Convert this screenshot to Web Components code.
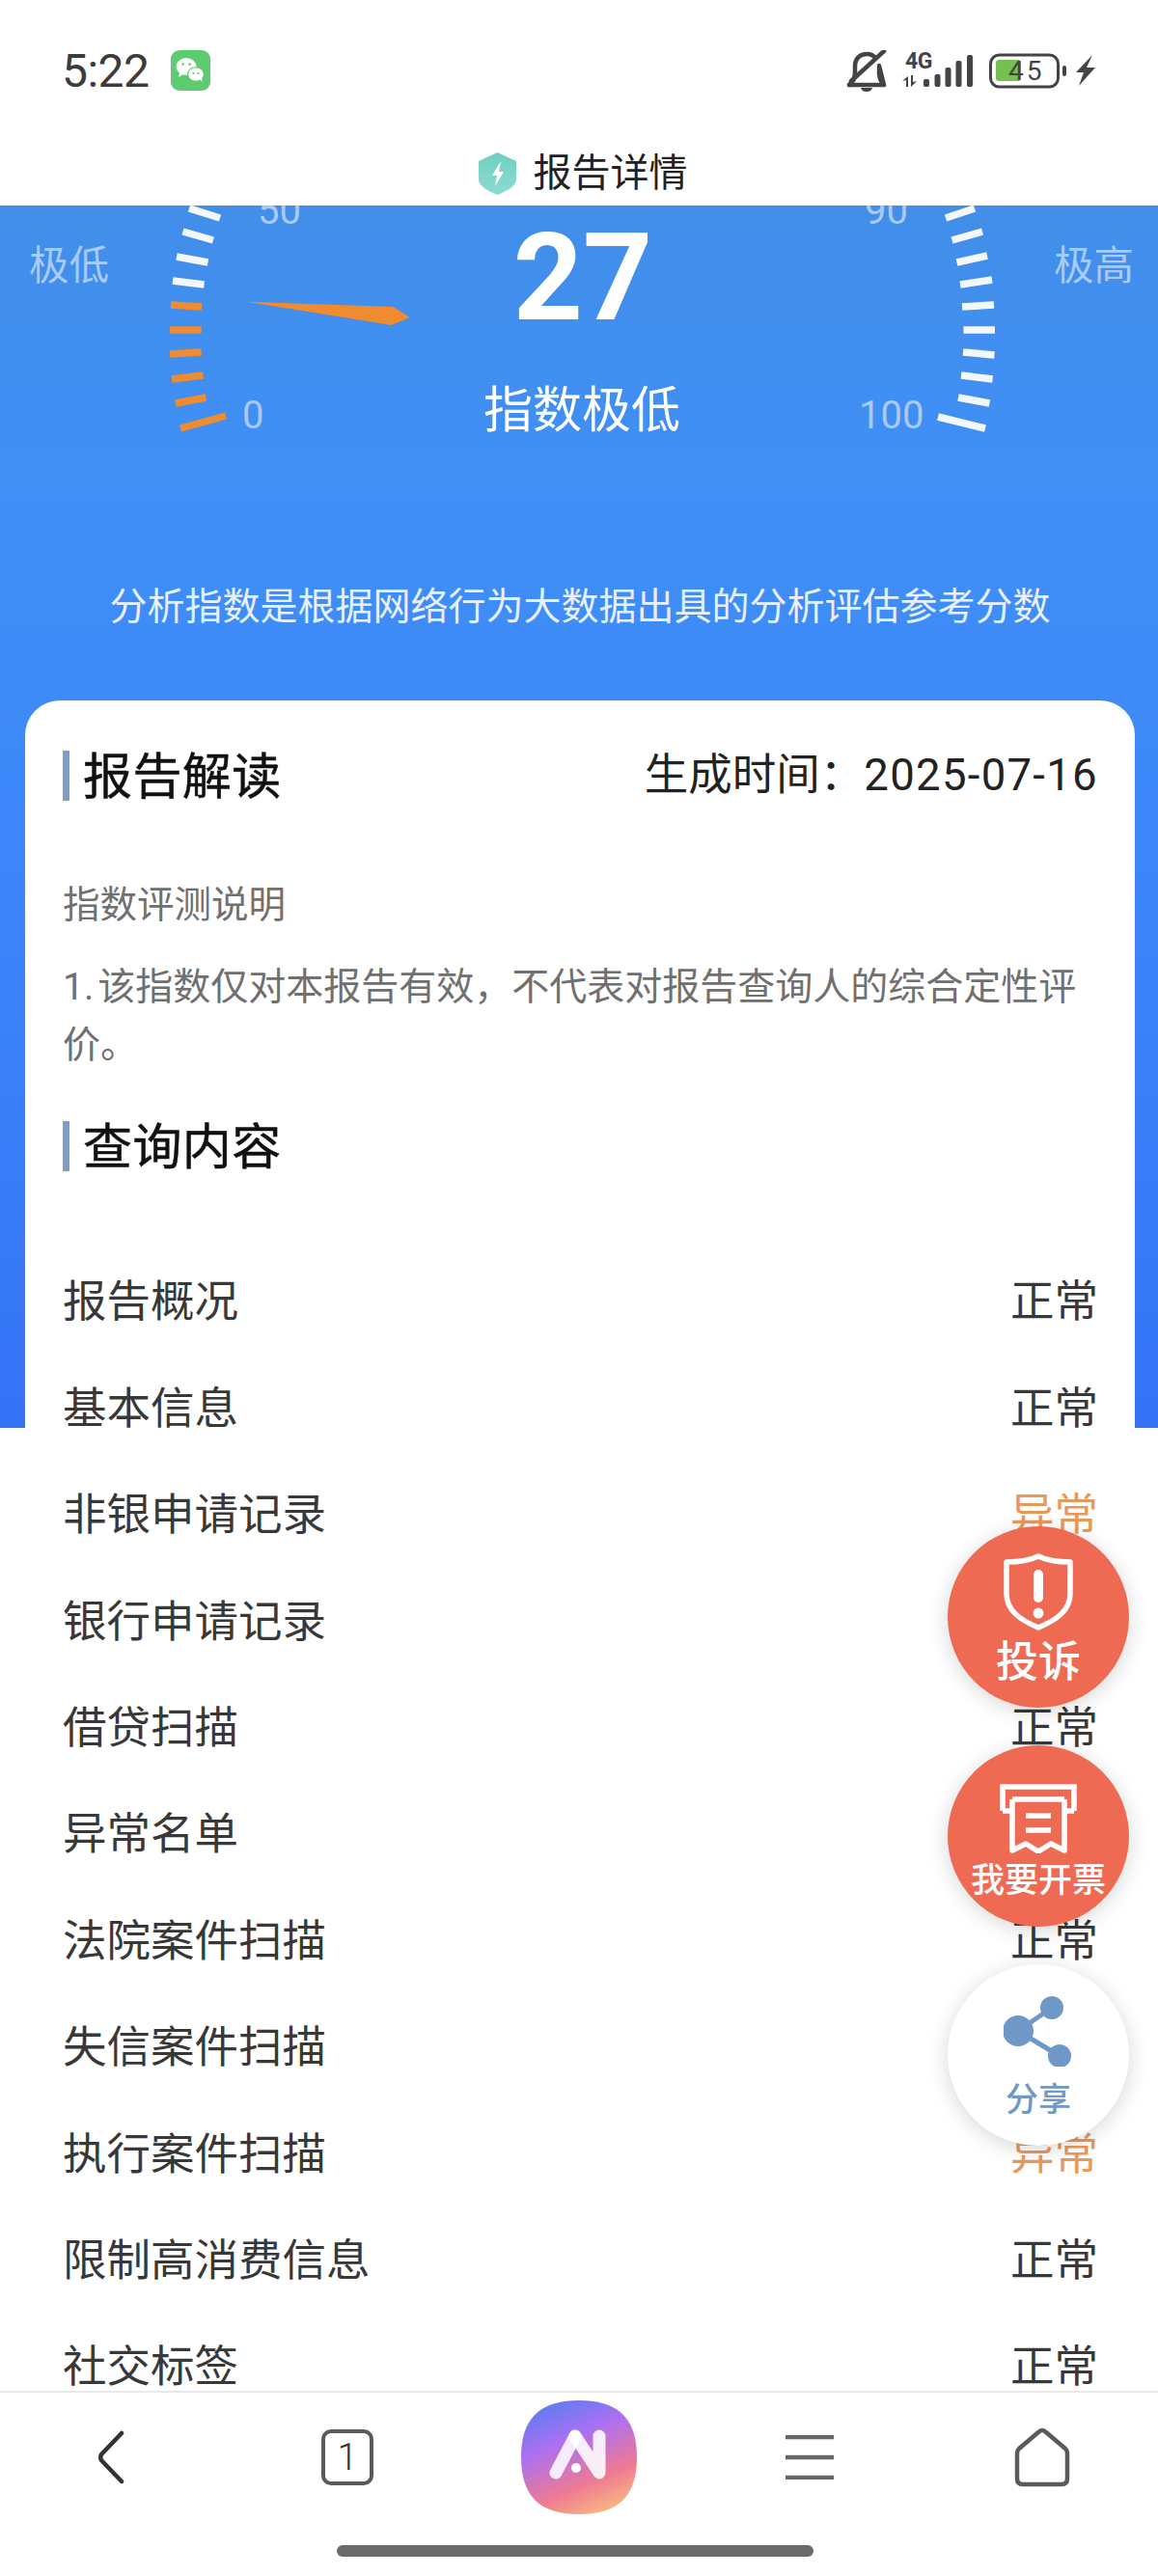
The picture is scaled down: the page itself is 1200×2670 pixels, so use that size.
<!DOCTYPE html>
<html lang="zh-CN">
<head>
<meta charset="utf-8">
<style>
html,body{margin:0;padding:0;background:#fff}
body{width:1200px;height:2670px;overflow:hidden;position:relative;display:flex;flex-direction:column;font-family:Roboto,"Noto Sans CJK SC",sans-serif;color:#333}
main-view{flex:1;min-height:0}
</style>
</head>
<body>
<status-bar></status-bar>
<title-bar>报告详情</title-bar>
<main-view>
  <gauge-panel score="27" level="指数极低">分析指数是根据网络行为大数据出具的分析评估参考分数</gauge-panel>
  <report-card>
    <card-heading label="生成时间&#xFF1A;" date="2025-07-16">报告解读</card-heading>
    <note-text></note-text>
    <card-heading class="second">查询内容</card-heading>
    <report-row>报告概况</report-row>
    <report-row>基本信息</report-row>
    <report-row state="异常">非银申请记录</report-row>
    <report-row>银行申请记录</report-row>
    <report-row>借贷扫描</report-row>
    <report-row>异常名单</report-row>
    <report-row>法院案件扫描</report-row>
    <report-row>失信案件扫描</report-row>
    <report-row state="异常">执行案件扫描</report-row>
    <report-row>限制高消费信息</report-row>
    <report-row>社交标签</report-row>
  </report-card>
</main-view>
<bottom-nav></bottom-nav>
<float-actions></float-actions>
<script>
function def(name, css, html){
  customElements.define(name, class extends HTMLElement{
    connectedCallback(){
      if(this.shadowRoot) return;
      const r=this.attachShadow({mode:'open'});
      r.innerHTML='<style>'+css+'</style>'+(typeof html==='function'?html(this):html);
    }
  });
}
const CJK='Roboto,"Noto Sans CJK SC",sans-serif';

def('status-bar',`
:host{display:flex;height:118px;box-sizing:border-box;padding:52px 64px 0 64px;justify-content:space-between;align-items:flex-start;background:#fff;flex:none}
.l{display:flex;align-items:flex-start;gap:20px}
.t{font:400 48px/44px ${CJK};color:#3c3c3c;width:93px;letter-spacing:-.5px}
svg{display:block}
`,`
<div class="l"><div class="t">5:22</div>
<svg width="41" height="42" viewBox="0 0 41 42"><rect width="41" height="42" rx="9" fill="#5dcb6f"/>
<ellipse cx="16" cy="17" rx="10.500" ry="9" fill="#fff"/><path d="M9 23l-1 5 5-3z" fill="#fff"/>
<ellipse cx="26" cy="25" rx="9" ry="7.800" fill="#5dcb6f"/><ellipse cx="26" cy="25" rx="7.800" ry="6.800" fill="#fff"/><path d="M30 30l2.500 3-.5-5z" fill="#fff"/>
<circle cx="12.500" cy="14.500" r="1.300" fill="#5dcb6f"/><circle cx="19.500" cy="14.500" r="1.300" fill="#5dcb6f"/><circle cx="23.500" cy="24" r="1.100" fill="#5dcb6f"/><circle cx="28.500" cy="24" r="1.100" fill="#5dcb6f"/></svg></div>
<svg width="260" height="46" viewBox="876 52 260 46">
<g fill="none" stroke="#444" stroke-width="4.500" stroke-linecap="round" stroke-linejoin="round">
<path d="M880 88c4-3 6-7 6-13v-7c0-7 5-12 12-12 4 0 7 1 9 4"/><path d="M911 68v7c0 6 2 10 5 13z"/><path d="M880 88h36"/><path d="M882 84l34-31"/></g>
<path d="M892 91h12c-1 3-3 4-6 4s-5-1-6-4z" fill="#444"/>
<text x="938" y="71" font-family="Roboto" font-weight="700" font-size="23" fill="#444" letter-spacing="-.5">4G</text>
<g fill="#444"><path d="M941 79v11h-2v-7l-4 1zM944 78h2v7l4-1-6 6z"/><rect x="957" y="82" width="6" height="8" rx="2"/><rect x="968.500" y="77" width="6" height="13" rx="2"/><rect x="979.500" y="70" width="6" height="20" rx="2"/><rect x="990.500" y="63" width="6" height="27" rx="2"/><rect x="1002" y="57" width="6" height="33" rx="2"/></g>
<rect x="1026.500" y="57" width="70" height="33" rx="9" fill="none" stroke="#444" stroke-width="3"/>
<rect x="1032" y="62" width="26" height="22" rx="3" fill="#76c04f"/>
<text x="1045" y="83" font-family="Roboto" font-size="28" fill="#444" letter-spacing="3">45</text>
<rect x="1101" y="68" width="4" height="11" rx="2" fill="#444"/>
<path d="M1132 57L1115 75h8l-5 14 17-19h-9z" fill="#444"/>
</svg>`);

def('title-bar',`
:host{display:flex;flex:none;height:95px;box-sizing:border-box;padding:28px 0 0 8px;justify-content:center;align-items:center;gap:18px;background:#fff;font:400 40px/1 ${CJK};color:#222}
svg{display:block}
`,`<svg width="39" height="44" viewBox="0 0 39 44"><defs><linearGradient id="s" x1="0" y1="0" x2="0" y2="1"><stop offset="0" stop-color="#6fcfc0"/><stop offset="1" stop-color="#8cdcd0"/></linearGradient></defs>
<path d="M19.500 0L39 9v19c0 7-10 12-19.500 16C10 40 0 35 0 28V9z" fill="url(#s)"/><path d="M23 9l-9 15h5l-2 11 9-15h-5z" fill="#fff"/></svg><span><slot></slot></span>`);

def('main-view',`
:host{display:block;overflow:hidden;background:linear-gradient(#428ee9 0,#3f8ff6 300px,#3d86f9 700px,#3473f6 1267px,#fff 1267px)}
`,`<slot></slot>`);

function tick(a){return a.map(p=>`<line x1="${p[0]}" y1="${p[1]}" x2="${p[2]}" y2="${p[3]}"/>`).join('')}
def('gauge-panel',`
:host{display:block;height:513px}
.stage{position:relative;height:386px;display:flex;flex-direction:column;align-items:center;box-sizing:border-box;padding:10px 0 0 6px;overflow:hidden}
svg{position:absolute;left:0;top:0}
svg text{font-family:${CJK};font-size:40px;fill:#a9caf6}
svg text.k{font-size:41.500px}
.score{position:relative;font:700 126px/130px ${CJK};color:#fff;left:1px}
.level{position:relative;font:400 51px/70px ${CJK};color:#fff;margin-top:38px}
.desc{font:400 39px/60px ${CJK};color:#e8f0fd;text-align:center;padding-left:2px}
`,h=>`<div class="stage">
<svg width="1200" height="386" viewBox="0 213 1200 386">
<text class="k" x="30" y="290">极低</text><text class="k" x="1092" y="290">极高</text>
<text x="267" y="232">50</text><text x="896" y="232">90</text><text x="251" y="444">0</text><text x="890" y="444">100</text>
<g stroke="#f08b2f" stroke-width="7.500">${tick([[187,444,234,431],[182,418,213.5,412],[178,393,210.5,389],[176,367,208.6,365],[176,342,208.6,342],[177,316,209,318]])}</g>
<g stroke="#f4f8fe" stroke-width="7.500">${tick([[179,291,211.6,295],[183,266,215.5,272],[189.5,240,221,249],[196,216,228,226],[972,432,1021,444],[993,412,1025.5,418],[996,389,1028.6,393],[998,365,1030.5,368],[998.4,342,1031,342],[997,318,1030,316],[995,295,1028,290],[991.5,272,1023,265],[986.5,249,1018,240],[980,226,1010,216]])}</g>
<polygon points="255.600,312.700 407.600,318 424.800,329 405.700,337" fill="#f08b2f"/>
</svg>
<div class="score">${h.getAttribute('score')}</div><div class="level">${h.getAttribute('level')}</div></div>
<div class="desc"><slot></slot></div>`);

def('report-card',`
:host{display:block;margin:0 24px 0 26px;background:#fff;border-radius:36px 36px 0 0;padding:52px 38px 0 39px;box-sizing:border-box}
`,`<slot></slot>`);

def('card-heading',`
:host{display:flex;align-items:center;justify-content:space-between;height:52px;color:#111}
:host(.second){margin-bottom:81px}
.h{border-left:7px solid #7b9fc9;padding-left:14px;font:400 51px/55px ${CJK};height:52px;letter-spacing:.4px;-webkit-text-stroke:.5px #111}
.d{font:400 45.500px/52px ${CJK};color:#222}
.d b{font-weight:400;letter-spacing:1.300px}
`,h=>`<div class="h"><slot></slot></div><div class="d">${h.getAttribute('label')||''}<b>${h.getAttribute('date')||''}</b></div>`);

def('note-text',`
:host{display:block;color:#707070;font:400 39px/60px ${CJK};padding-top:80px;height:332px;box-sizing:border-box}
.n{font-size:38.500px;margin-bottom:27px;line-height:56px}
p{margin:0;width:1085px}
i{font-style:normal;margin-right:4px}
`,`<div class="n">指数评测说明</div><p><i>1.</i>该指数仅对本报告有效&#xFF0C;不代表对报告查询人的综合定性评价。</p>`);

def('report-row',`
:host{display:flex;justify-content:space-between;align-items:center;height:110.400px;font:400 45.500px/1 ${CJK};color:#383838}
.w{color:#e8995a}
`,h=>{const s=h.getAttribute('state')||'正常';return `<div><slot></slot></div><div class="${s==='异常'?'w':''}">${s}</div>`});

def('float-actions',`
:host{position:absolute;left:982px;top:1582px;display:flex;flex-direction:column;gap:39px}
.b{width:188px;height:188px;border-radius:50%;background:#ee6a52;box-shadow:0 4px 22px rgba(0,0,0,.16);display:flex;flex-direction:column;align-items:center;color:#fff;box-sizing:border-box}
.w{background:#fff;color:#7099c8}
svg{display:block}
.a{padding-top:28px;font:500 44px/44px ${CJK}}.a svg{margin-bottom:11px}
.c{padding-top:40px;font:500 35px/40px ${CJK}}.c svg{margin-bottom:9px}
.s{padding-top:32px;font:500 34px/40px ${CJK}}.s svg{margin-bottom:14px}
`,`
<div class="b a"><svg width="72" height="80" viewBox="0 0 72 80"><path d="M36 3c10 5 21 6 33 6v33c0 17-14 27-33 35C17 69 3 59 3 42V9c12 0 23-1 33-6z" fill="none" stroke="#fff" stroke-width="5.500" stroke-linejoin="round"/><rect x="31" y="17" width="10" height="34" rx="5" fill="#fff"/><circle cx="36" cy="62" r="5.500" fill="#fff"/></svg>投诉</div>
<div class="b c"><svg width="80" height="72" viewBox="0 0 80 72"><g fill="none" stroke="#fff" stroke-width="5.500"><path d="M3 28V3h74v25"/><path d="M3 28h10M67 28h10"/><path d="M13 16h54M13 16v53l14-7 13 8 13-8 14 7V16" stroke-linejoin="round"/><path d="M27 33h26M27 48h26"/></g></svg>我要开票</div>
<div class="b w s"><svg width="72" height="74" viewBox="0 0 72 74"><circle cx="15" cy="37" r="16" fill="#6f98c9"/><circle cx="50" cy="13" r="12" fill="#6f98c9"/><circle cx="58" cy="63" r="12" fill="#6f98c9"/><path d="M15 37L50 13M15 37L58 63" stroke="#6f98c9" stroke-width="5"/></svg>分享</div>`);

def('bottom-nav',`
:host{display:block;flex:none;height:192px;box-sizing:border-box;border-top:2px solid #e9e9e9;background:#fff}
.r{display:grid;grid-template-columns:repeat(5,240px);height:128px;padding-top:3px;align-items:center;justify-items:center}
svg{display:block}
.tab{width:54px;height:58px;box-sizing:border-box;border:4px solid #5a5a5a;border-radius:10px;font:300 38px/50px ${CJK};text-align:center;color:#333}
.logo{width:120px;height:118px;display:block}
.bar{width:494px;height:12px;border-radius:6px;background:#6b6b6b;margin:27px 0 0 349px}
`,`<div class="r">
<svg width="48" height="56" viewBox="0 0 48 56" style="margin-left:-6px"><path d="M33 3L12 25q-1.500 3 0 6L33 53" fill="none" stroke="#333" stroke-width="4.500" stroke-linecap="round" stroke-linejoin="round"/></svg>
<div class="tab">1</div>
<svg class="logo" viewBox="0 0 120 118"><defs><linearGradient id="lg" x1=".28" y1="0" x2=".72" y2="1"><stop offset="0" stop-color="#5f7cf0"/><stop offset=".33" stop-color="#ab70f2"/><stop offset=".72" stop-color="#ee7a92"/><stop offset="1" stop-color="#f9b980"/></linearGradient></defs>
<path d="M60 0C100 0 120 18 120 59S100 118 60 118 0 100 0 59 20 0 60 0z" fill="url(#lg)"/>
<path d="M56 37L36 75" stroke="#f5ecfb" stroke-width="13" stroke-linecap="round" fill="none"/><path d="M56 37L81 75V37" stroke="#fff" stroke-opacity=".88" stroke-width="13" stroke-linecap="round" stroke-linejoin="round" fill="none"/><circle cx="57" cy="70" r="5" fill="#fff"/></svg>
<svg width="52" height="46" viewBox="0 0 52 46" style="margin-right:2px"><path d="M1 2h50M1 23h50M1 44h50" stroke="#666" stroke-width="4.500" fill="none"/></svg>
<svg width="58" height="62" viewBox="0 0 58 62"><path d="M29 3Q27 3 25 5L5 22q-2 2-2 5v26q0 6 6 6h40q6 0 6-6V27q0-3-2-5L33 5q-2-2-4-2z" fill="none" stroke="#5a5a5a" stroke-width="4.500" stroke-linejoin="round"/></svg>
</div><div class="bar"></div>`);
</script>
</body>
</html>
